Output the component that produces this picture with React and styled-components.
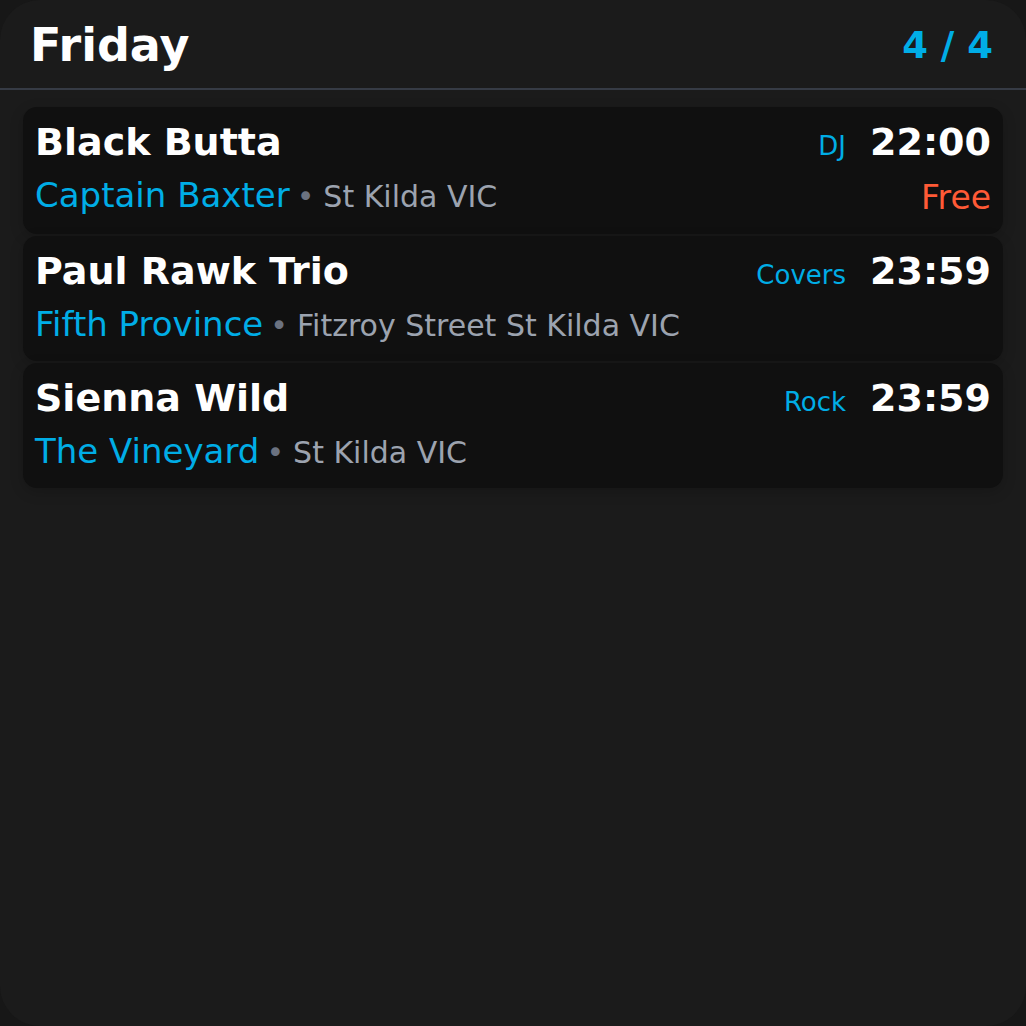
import React from 'react'
import styled, { createGlobalStyle } from 'styled-components'

const GlobalStyle = createGlobalStyle`
  html, body {
    margin: 0;
    padding: 0;
    background: #171717;
  }
  body {
    font-family: "DejaVu Sans", "Liberation Sans", sans-serif;
  }
`

const Screen = styled.div`
  width: 1026px;
  height: 1026px;
  box-sizing: border-box;
  background: #1b1b1b;
  border-radius: 40px;
  overflow: hidden;
  display: flex;
  flex-direction: column;
`

const Header = styled.header`
  height: 88px;
  padding: 0 33px 0 30px;
  display: flex;
  align-items: center;
  justify-content: space-between;
  border-bottom: 2px solid #363b45;
`

const DayTitle = styled.h1`
  margin: 0;
  font-size: 46px;
  font-weight: 700;
  color: #ffffff;
  padding-top: 2px;
`

const Counter = styled.div`
  font-size: 37px;
  font-weight: 700;
  color: #00ade6;
  padding-top: 2px;
`

const List = styled.div`
  padding: 17px 23px;
  display: flex;
  flex-direction: column;
  gap: 2px;
`

const Card = styled.div`
  background: #101010;
  border-radius: 14px;
  padding: 13px 12px 17px 12px;
  display: flex;
  justify-content: space-between;
  box-shadow: 0 4px 14px rgba(0, 0, 0, 0.18);
`

const Column = styled.div`
  display: flex;
  flex-direction: column;
  align-items: ${p => (p.$end ? 'flex-end' : 'flex-start')};
  gap: ${p => p.$gap}px;
`

const Act = styled.div`
  font-size: 38px;
  font-weight: 700;
  color: #ffffff;
  white-space: nowrap;
`

const Where = styled.div`
  white-space: nowrap;
  display: flex;
  align-items: baseline;
`

const Venue = styled.span`
  font-size: 34px;
  color: #00ade6;
`

const Dot = styled.span`
  font-size: 30px;
  color: #6b7280;
  margin: 0 9px 0 7px;
`

const Place = styled.span`
  font-size: 30px;
  color: #9ca3af;
`

const TimeRow = styled.div`
  display: flex;
  align-items: baseline;
  gap: 24px;
`

const Genre = styled.span`
  font-size: 26px;
  color: #00ade6;
`

const Time = styled.span`
  font-size: 38px;
  font-weight: 700;
  color: #ffffff;
`

const Price = styled.span`
  font-size: 33px;
  color: #ff5a36;
`

const gigs = [
  { act: 'Black Butta', venue: 'Captain Baxter', place: 'St Kilda VIC', genre: 'DJ', time: '22:00', price: 'Free' },
  { act: 'Paul Rawk Trio', venue: 'Fifth Province', place: 'Fitzroy Street St Kilda VIC', genre: 'Covers', time: '23:59' },
  { act: 'Sienna Wild', venue: 'The Vineyard', place: 'St Kilda VIC', genre: 'Rock', time: '23:59' },
]

export default function App() {
  return (
    <>
      <GlobalStyle />
      <Screen>
        <Header>
          <DayTitle>Friday</DayTitle>
          <Counter>4 / 4</Counter>
        </Header>
        <List>
          {gigs.map(g => (
            <Card key={g.act}>
              <Column $gap={11}>
                <Act>{g.act}</Act>
                <Where>
                  <Venue>{g.venue}</Venue>
                  <Dot>•</Dot>
                  <Place>{g.place}</Place>
                </Where>
              </Column>
              <Column $end $gap={14}>
                <TimeRow>
                  <Genre>{g.genre}</Genre>
                  <Time>{g.time}</Time>
                </TimeRow>
                {g.price && <Price>{g.price}</Price>}
              </Column>
            </Card>
          ))}
        </List>
      </Screen>
    </>
  )
}
